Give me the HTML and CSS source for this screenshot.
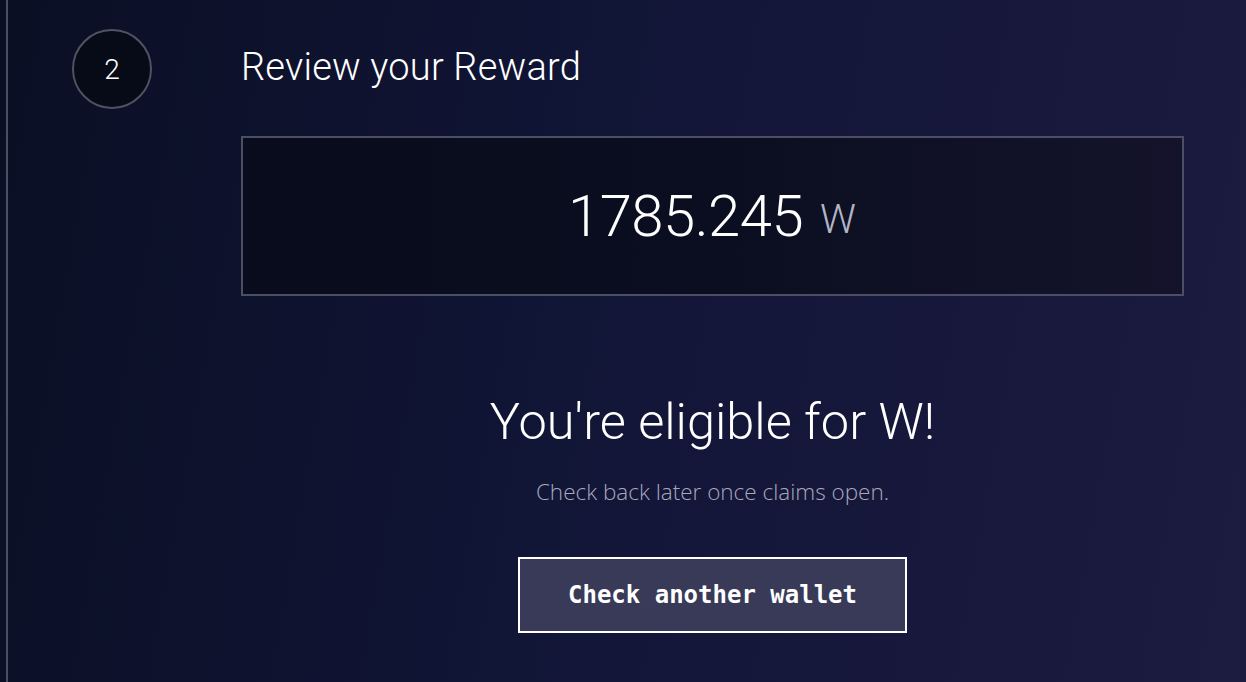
FILE: index.html
```html
<!DOCTYPE html>
<html lang="en">
<head>
    <meta charset="UTF-8">
    <meta name="viewport" content="width=device-width, initial-scale=1.0">
    <title>Review your Reward</title>
    <link rel="stylesheet" href="styles.css">
</head>
<body>
    <div class="page">
        <div class="step">
            <div class="step-marker">
                <div class="step-number">2</div>
            </div>

            <div class="step-body">
                <h2 class="step-title">Review your Reward</h2>

                <div class="reward-box">
                    <span class="reward-amount">1785.245</span>
                    <span class="reward-unit">W</span>
                </div>

                <div class="result">
                    <h3 class="result-title">You're eligible for W!</h3>
                    <p class="result-note">Check back later once claims open.</p>
                    <button type="button" class="result-button">Check another wallet</button>
                </div>
            </div>
        </div>
    </div>
</body>
</html>
```

FILE: styles.css
```css
:root {
    --line-color: #4b4f63;
    --text-color: #ffffff;
    --muted-color: #a7a9bd;
}

* {
    margin: 0;
    padding: 0;
    box-sizing: border-box;
}

html, body {
    height: 100%;
}

body {
    background: linear-gradient(100deg, #0a0f24 0%, #111536 45%, #1c1b40 100%);
    color: var(--text-color);
    font-family: 'Open Sans', sans-serif;
    overflow: hidden;
}

.page {
    height: 100%;
    margin-left: 6px;
    border-left: 2px solid var(--line-color);
}

.step {
    display: flex;
}

.step-marker {
    width: 233px;
    flex-shrink: 0;
    padding: 29px 0 0 64px;
}

.step-number {
    width: 80px;
    height: 80px;
    border-radius: 50%;
    border: 2px solid #4f5262;
    background-color: #070a17;
    display: flex;
    justify-content: center;
    align-items: center;
    font-family: 'Roboto', sans-serif;
    font-size: 28px;
    font-weight: 300;
}

.step-body {
    width: 943px;
}

.step-title {
    font-family: 'Roboto', sans-serif;
    font-weight: 300;
    font-size: 38px;
    line-height: 44px;
    margin-top: 45px;
    letter-spacing: 0.2px;
}

.reward-box {
    margin-top: 47px;
    height: 160px;
    border: 2px solid var(--line-color);
    background: linear-gradient(90deg, #080c1c 0%, #0b0e20 50%, #14132b 100%);
    display: flex;
    justify-content: center;
    align-items: center;
    gap: 17px;
    padding-right: 1px;
}

.reward-amount {
    font-family: 'Roboto', sans-serif;
    font-weight: 300;
    font-size: 58px;
    letter-spacing: -0.5px;
}

.reward-unit {
    font-family: 'Roboto', sans-serif;
    font-weight: 300;
    font-size: 40px;
    color: #b4b5c4;
    margin-top: 6px;
}

.result {
    display: flex;
    flex-direction: column;
    align-items: center;
    margin-top: 96px;
}

.result-title {
    font-family: 'Roboto', sans-serif;
    font-weight: 300;
    font-size: 50.5px;
    line-height: 60px;
}

.result-note {
    margin-top: 24px;
    font-size: 22.5px;
    font-weight: 300;
    color: var(--muted-color);
}

.result-button {
    margin-top: 50px;
    width: 389px;
    height: 76px;
    background-color: #383a57;
    border: 2px solid #ffffff;
    color: #ffffff;
    font-family: 'DejaVu Sans Mono', monospace;
    font-weight: bold;
    font-size: 24px;
    cursor: pointer;
}
```
